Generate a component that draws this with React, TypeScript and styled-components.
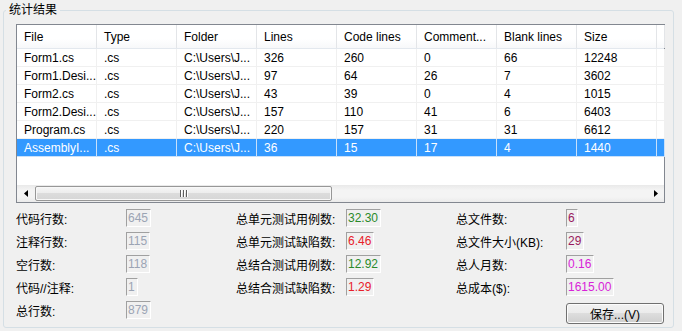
import styled, { createGlobalStyle } from 'styled-components';

const GlobalStyle = createGlobalStyle`
  html, body {
    margin: 0;
    padding: 0;
    background: #f0f0f0;
  }
  body {
    font-family: "Liberation Sans", "Noto Sans CJK SC", sans-serif;
    font-size: 12px;
    color: #000;
  }
`;

type Row = string[];

const columns = ['File', 'Type', 'Folder', 'Lines', 'Code lines', 'Comment...', 'Blank lines', 'Size'];

const rows: Row[] = [
  ['Form1.cs', '.cs', 'C:\\Users\\J...', '326', '260', '0', '66', '12248'],
  ['Form1.Desi...', '.cs', 'C:\\Users\\J...', '97', '64', '26', '7', '3602'],
  ['Form2.cs', '.cs', 'C:\\Users\\J...', '43', '39', '0', '4', '1015'],
  ['Form2.Desi...', '.cs', 'C:\\Users\\J...', '157', '110', '41', '6', '6403'],
  ['Program.cs', '.cs', 'C:\\Users\\J...', '220', '157', '31', '31', '6612'],
  ['AssemblyI...', '.cs', 'C:\\Users\\J...', '36', '15', '17', '4', '1440'],
];

const selectedRow = 5;

const GRAY = '#9ba4b4';
const GREEN = '#2a8a2a';
const RED = '#e8202a';
const PLUM = '#99195e';
const PINK = '#d822d8';

const fields: { label: string; value: string; color: string }[][] = [
  [
    { label: '代码行数:', value: '645', color: GRAY },
    { label: '注释行数:', value: '115', color: GRAY },
    { label: '空行数:', value: '118', color: GRAY },
    { label: '代码//注释:', value: '1', color: GRAY },
    { label: '总行数:', value: '879', color: GRAY },
  ],
  [
    { label: '总单元测试用例数:', value: '32.30', color: GREEN },
    { label: '总单元测试缺陷数:', value: '6.46', color: RED },
    { label: '总结合测试用例数:', value: '12.92', color: GREEN },
    { label: '总结合测试缺陷数:', value: '1.29', color: RED },
  ],
  [
    { label: '总文件数:', value: '6', color: PLUM },
    { label: '总文件大小(KB):', value: '29', color: PLUM },
    { label: '总人月数:', value: '0.16', color: PINK },
    { label: '总成本($):', value: '1615.00', color: PINK },
  ],
];

export default function App() {
  return (
    <Page>
      <GlobalStyle />
      <GroupBox>
        <legend>统计结果</legend>
        <GroupBody>
          <ListView>
            <HeaderRow>
              {columns.map((c) => (
                <HeaderCell key={c}>{c}</HeaderCell>
              ))}
              <HeaderCell />
            </HeaderRow>
            {rows.map((r, i) => (
              <DataRow key={i} $selected={i === selectedRow}>
                {r.map((v, j) => (
                  <Cell key={j}>{v}</Cell>
                ))}
                <Cell />
              </DataRow>
            ))}
            <Filler />
            <HScroll>
              <ArrowButton>
                <svg width="4" height="7" viewBox="0 0 4 7">
                  <path d="M4 0 L0 3.5 L4 7 Z" fill="#000" />
                </svg>
              </ArrowButton>
              <Track>
                <Thumb>
                  <Grip>
                    <i />
                    <i />
                    <i />
                  </Grip>
                </Thumb>
              </Track>
              <ArrowButton>
                <svg width="4" height="7" viewBox="0 0 4 7">
                  <path d="M0 0 L4 3.5 L0 7 Z" fill="#000" />
                </svg>
              </ArrowButton>
            </HScroll>
          </ListView>

          <Summary>
            {fields.map((col, ci) => (
              <Column key={ci}>
                {col.map((f) => (
                  <Field key={f.label}>
                    <Label>{f.label}</Label>
                    <Value $color={f.color}>{f.value}</Value>
                  </Field>
                ))}
                {ci === 2 && <SaveButton>保存...(V)</SaveButton>}
              </Column>
            ))}
          </Summary>
        </GroupBody>
      </GroupBox>
    </Page>
  );
}

const Page = styled.div`
  width: 682px;
  height: 331px;
  box-sizing: border-box;
  padding: 2px 0 0 3px;
  overflow: hidden;
`;

const GroupBox = styled.fieldset`
  box-sizing: border-box;
  width: 671px;
  height: 326px;
  min-width: 0;
  margin: 0;
  padding: 0;
  border: 1px solid #d5dfe5;
  border-radius: 3px;

  > legend {
    margin-left: 2px;
    padding: 0 3px;
    font-size: 12px;
    line-height: 16px;
  }
`;

const GroupBody = styled.div`
  padding: 6px 0 0 12px;
`;

const ListView = styled.div`
  width: 649px;
  height: 179px;
  box-sizing: border-box;
  border: 1px solid #828790;
  background: #fff;
  display: flex;
  flex-direction: column;
`;

const HeaderRow = styled.div`
  display: grid;
  grid-template-columns: repeat(8, 80px) 1fr;
  height: 24px;
  box-sizing: border-box;
  border-bottom: 1px solid #e3e8ee;
  background: linear-gradient(#ffffff, #ffffff 60%, #f7f8fa);
`;

const HeaderCell = styled.div`
  padding: 2px 0 0 7px;
  line-height: 21px;
  border-right: 1px solid #e3e5e8;
  white-space: nowrap;
  overflow: hidden;
`;

const DataRow = styled.div<{ $selected?: boolean }>`
  display: grid;
  grid-template-columns: repeat(8, 80px) 1fr;
  height: 18px;
  background: ${(p) => (p.$selected ? '#3399ff' : '#fff')};
  color: ${(p) => (p.$selected ? '#fff' : '#000')};

  > div {
    border-color: ${(p) => (p.$selected ? '#c8e0fa' : '#f0f0f0')};
  }
`;

const Cell = styled.div`
  box-sizing: border-box;
  padding: 1px 0 0 7px;
  line-height: 16px;
  border-right: 1px solid #f0f0f0;
  border-bottom: 1px solid #f0f0f0;
  white-space: nowrap;
  overflow: hidden;
`;

const Filler = styled.div`
  flex: 1;
`;

const HScroll = styled.div`
  display: flex;
  height: 17px;
  background: linear-gradient(#e9e9e9, #f4f4f4 30%, #f4f4f4 70%, #ebebeb);
`;

const ArrowButton = styled.div`
  width: 17px;
  display: flex;
  align-items: center;
  justify-content: center;
`;

const Track = styled.div`
  flex: 1;
  display: flex;
  align-items: center;
`;

const Thumb = styled.div`
  width: 297px;
  height: 15px;
  margin-left: 1px;
  box-sizing: border-box;
  border: 1px solid #979797;
  border-radius: 2px;
  background: linear-gradient(#f6f6f6, #ececec 50%, #dcdcdc 50%, #d6d6d6);
  box-shadow: inset 0 0 0 1px #f8f8f8;
  display: flex;
  align-items: center;
  justify-content: center;
`;

const Grip = styled.div`
  display: flex;
  gap: 2px;

  > i {
    width: 1px;
    height: 7px;
    background: #5d5d5d;
    box-shadow: 1px 0 0 #fff;
  }
`;

const Summary = styled.div`
  display: grid;
  grid-template-columns: 220px 220px 1fr;
  margin-top: 6px;
`;

const Column = styled.div`
  display: flex;
  flex-direction: column;
  gap: 5px;
`;

const Field = styled.div`
  display: flex;
  align-items: center;
  height: 18px;
`;

const Label = styled.span`
  width: 110px;
  white-space: nowrap;
`;

const Value = styled.span<{ $color: string }>`
  box-sizing: border-box;
  height: 18px;
  line-height: 16px;
  padding: 0 2px 0 1px;
  border: 1px solid;
  border-color: #a0a0a0 #ffffff #ffffff #a0a0a0;
  color: ${(p) => p.$color};
`;

const SaveButton = styled.button`
  width: 98px;
  height: 21px;
  margin: 2px 0 0 110px;
  padding: 0;
  box-sizing: border-box;
  border: 1px solid #707070;
  border-radius: 3px;
  background: linear-gradient(#f2f2f2, #ebebeb 50%, #dddddd 50%, #cfcfcf);
  box-shadow: inset 0 0 0 1px #fcfcfc;
  font-family: "Liberation Sans", "Noto Sans CJK SC", sans-serif;
  font-size: 12px;
  color: #000;
`;
